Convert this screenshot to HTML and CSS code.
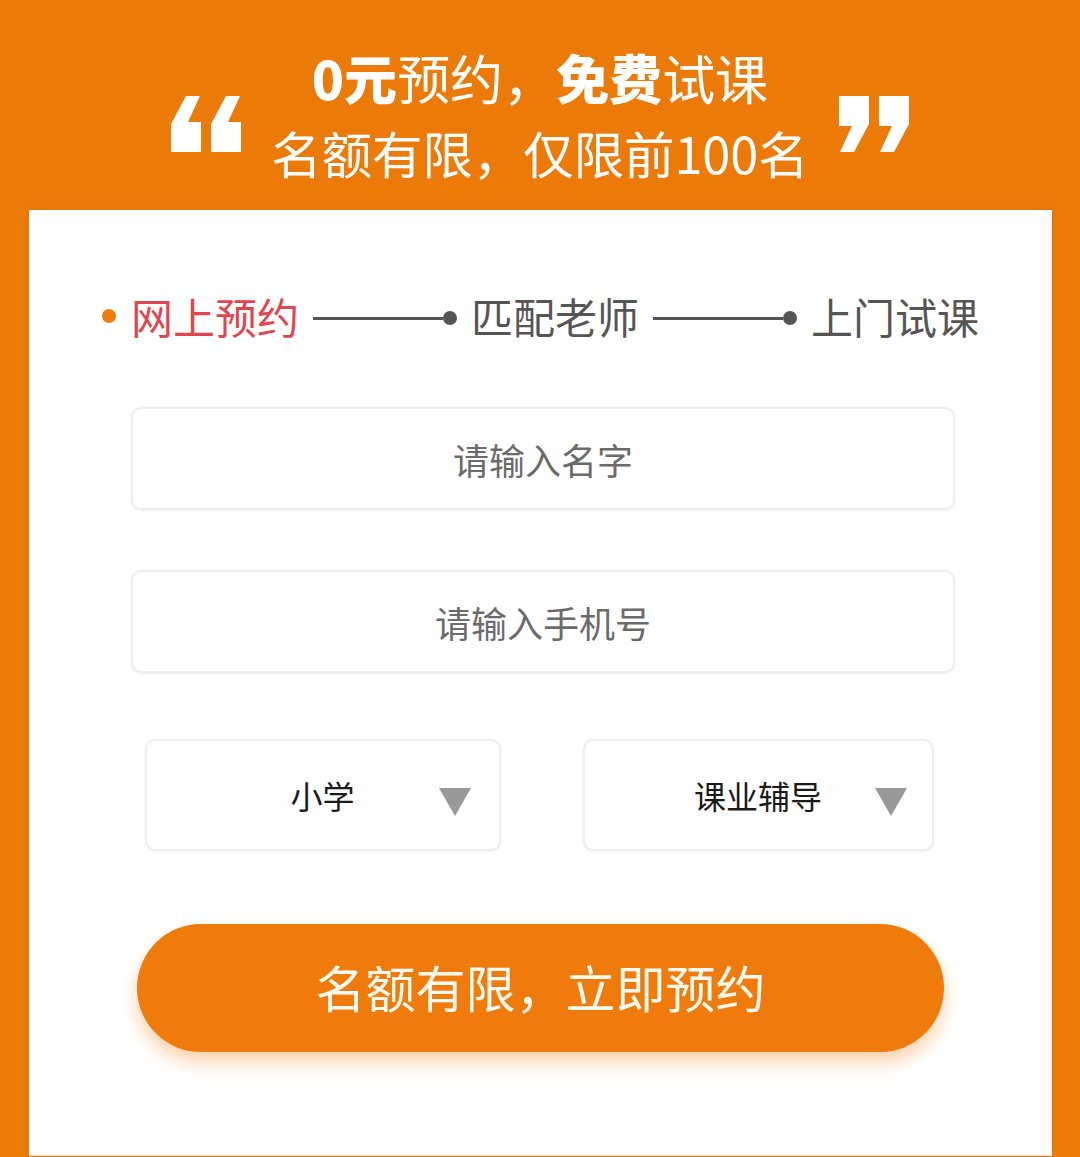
FILE: index.html
```html
<!DOCTYPE html>
<html lang="zh-CN">
<head>
    <meta charset="UTF-8">
    <meta name="viewport" content="width=device-width, initial-scale=1.0">
    <title>免费试课预约</title>
    <link rel="stylesheet" href="styles.css">
</head>
<body>
<div class="page">
    <div class="banner">
        <svg class="quote" width="72" height="56" viewBox="0 0 72 56">
            <polygon fill="#fff" points="17,0 31,0 19,26 32,26 32,56 2,56 2,28"/>
            <polygon fill="#fff" points="57,0 71,0 59,26 72,26 72,56 42,56 42,28"/>
        </svg>
        <div class="banner-text">
            <div class="line-one"><b>0元</b>预约，<b>免费</b>试课</div>
            <div class="line-two">名额有限，仅限前100名</div>
        </div>
        <svg class="quote quote-close" width="72" height="56" viewBox="0 0 72 56">
            <polygon fill="#fff" points="17,0 31,0 19,26 32,26 32,56 2,56 2,28"/>
            <polygon fill="#fff" points="57,0 71,0 59,26 72,26 72,56 42,56 42,28"/>
        </svg>
    </div>

    <div class="card">
        <div class="steps">
            <span class="dot dot-active"></span>
            <span class="step step-active">网上预约</span>
            <span class="link"><i></i><span class="dot"></span></span>
            <span class="step">匹配老师</span>
            <span class="link"><i></i><span class="dot"></span></span>
            <span class="step">上门试课</span>
        </div>

        <form class="form" onsubmit="return false">
            <input class="field" type="text" placeholder="请输入名字">
            <input class="field" type="tel" placeholder="请输入手机号">
            <div class="selects">
                <div class="select select-grade">
                    <span>小学</span>
                    <span class="arrow"></span>
                </div>
                <div class="select select-type">
                    <span>课业辅导</span>
                    <span class="arrow"></span>
                </div>
            </div>
            <button class="submit" type="submit">名额有限，立即预约</button>
        </form>
    </div>
</div>
</body>
</html>
```

FILE: styles.css
```css
body {
    margin: 0;
    background-color: #ec7a08;
    font-family: "Noto Sans CJK SC", "Noto Sans", sans-serif;
}

.page {
    width: 1080px;
    height: 1157px;
    overflow: hidden;
}

/* top banner */
.banner {
    display: flex;
    justify-content: center;
    align-items: flex-start;
    gap: 30px;
    height: 170px;
    padding-top: 40px;
    color: #fff;
}

.quote {
    margin-top: 56px;
    flex-shrink: 0;
}

.quote-close {
    transform: rotate(180deg);
}

.banner-text {
    text-align: center;
}

.line-one {
    font-size: 53px;
    line-height: 75px;
    font-weight: 400;
}

.line-one b {
    font-weight: 900;
}

.line-two {
    font-size: 50.4px;
    line-height: 75px;
    font-weight: 400;
}

/* white card */
.card {
    margin: 0 28px 0 29px;
    height: 945px;
    background-color: #fff;
    box-shadow: 0 0 6px rgba(0, 0, 0, 0.08);
    border-bottom: 1px solid #f3e3cf;
}

.steps {
    display: flex;
    justify-content: center;
    align-items: center;
    gap: 14px;
    padding-top: 81px;
    height: 50px;
    color: #555;
    font-size: 42px;
    line-height: 50px;
}

.step-active {
    color: #e0464f;
}

.dot {
    display: inline-block;
    width: 14px;
    height: 14px;
    border-radius: 50%;
    background-color: #555;
}

.dot-active {
    background-color: #ee7d0c;
    margin-right: 1px;
}

.link {
    display: flex;
    align-items: center;
    margin-top: 4px;
}

.link i {
    display: block;
    width: 130px;
    height: 3px;
    background-color: #555;
}

/* form */
.form {
    display: flex;
    flex-direction: column;
    align-items: center;
    padding-top: 66px;
}

.field {
    box-sizing: border-box;
    width: 824px;
    height: 103px;
    margin: 0 0 60px 5px;
    border: 2px solid #eeeeee;
    border-radius: 10px;
    background-color: #fefefe;
    box-shadow: 0 1px 3px rgba(0, 0, 0, 0.06);
    text-align: center;
    font-family: inherit;
    font-size: 36px;
    color: #333;
    outline: none;
}

.field::placeholder {
    color: #6b6b6b;
}

.field:last-of-type {
    margin-bottom: 66px;
}

.selects {
    display: flex;
    gap: 82px;
    margin-left: -3px;
}

.select {
    position: relative;
    box-sizing: border-box;
    height: 112px;
    display: flex;
    justify-content: center;
    align-items: center;
    border: 2px solid #eeeeee;
    border-radius: 10px;
    background-color: #fefefe;
    box-shadow: 0 1px 3px rgba(0, 0, 0, 0.06);
    font-size: 32px;
    color: #1a1a1a;
}

.select-grade {
    width: 356px;
}

.select-type {
    width: 351px;
}

.arrow {
    position: absolute;
    top: 47px;
    right: 28px;
    width: 0;
    height: 0;
    border-left: 16px solid transparent;
    border-right: 16px solid transparent;
    border-top: 28px solid #999;
}

.select-type .arrow {
    right: 25px;
}

.submit {
    margin-top: 73px;
    width: 807px;
    height: 128px;
    border: none;
    border-radius: 64px;
    background-color: #ee7b0b;
    box-shadow: 0 10px 18px rgba(238, 123, 11, 0.35);
    color: #fffaf0;
    font-family: inherit;
    font-size: 50px;
    line-height: 1;
    padding-bottom: 6px;
    cursor: pointer;
}
```
